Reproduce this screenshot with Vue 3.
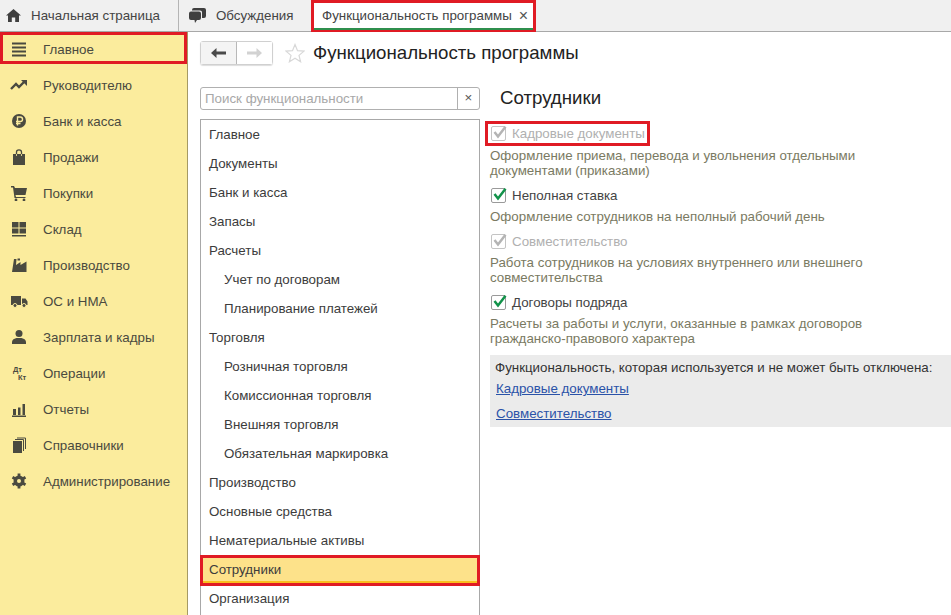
<template>
  <div class="page">
    <!-- вкладки -->
    <header class="tabs">
      <div class="tab tab--home">
        <svg class="tab__icon" width="15" height="13" viewBox="0 0 15 13">
          <path d="M7.5 0 L15 6.6 L13 6.6 L13 13 L9.2 13 L9.2 8.4 L5.8 8.4 L5.8 13 L2 13 L2 6.6 L0 6.6 Z" fill="#3f3f3f" />
        </svg>
        <span>Начальная страница</span>
      </div>
      <div class="tab tab--talk">
        <svg class="tab__icon" width="17" height="15" viewBox="0 0 17 15">
          <path d="M5 0 H15 Q17 0 17 2 V8 Q17 10 15 10 L13 10 V4 Q13 2.500 11 2.500 H3 V2 Q3 0 5 0 Z" fill="#3f3f3f" />
          <path d="M2 3.500 H10 Q12 3.500 12 5.500 V10 Q12 12 10 12 H8 L6 15 L5.500 12 H2 Q0 12 0 10 V5.500 Q0 3.500 2 3.500 Z" fill="#3f3f3f" />
        </svg>
        <span>Обсуждения</span>
      </div>
      <div class="tab tab--active">
        <span>Функциональность программы</span>
        <span class="tab__close">×</span>
      </div>
    </header>

    <div class="body">
      <!-- разделы -->
      <aside class="side">
        <div
          v-for="item in sections"
          :key="item.name"
          class="side__item"
          :class="{ 'side__item--active': item.active }"
        >
          <svg class="side__icon" width="18" height="16" viewBox="0 0 18 16" v-html="item.icon"></svg>
          <span>{{ item.name }}</span>
        </div>
      </aside>

      <main class="main">
        <div class="head">
          <div class="nav">
            <button type="button" class="nav__btn">
              <svg width="15" height="10" viewBox="0 0 15 10"><path d="M0 5 L5.500 0 V3.500 H15 V6.500 H5.500 V10 Z" fill="#4a4a4a" /></svg>
            </button>
            <button type="button" class="nav__btn nav__btn--off">
              <svg width="15" height="10" viewBox="0 0 15 10"><path d="M15 5 L9.500 0 V3.500 H0 V6.500 H9.500 V10 Z" fill="#d2d2d2" /></svg>
            </button>
          </div>
          <svg class="star" width="20" height="20" viewBox="0 0 20 20">
            <path d="M10 1.500 L12.500 7.700 L19 8.100 L14 12.400 L15.600 18.800 L10 15.300 L4.400 18.800 L6 12.400 L1 8.100 L7.500 7.700 Z" fill="none" stroke="#d8d8d8" stroke-width="1.200" />
          </svg>
          <h1 class="title">Функциональность программы</h1>
        </div>

        <div class="cols">
          <div class="left">
            <div class="search">
              <span class="search__text">Поиск функциональности</span>
              <span class="search__clear">×</span>
            </div>
            <ul class="list">
              <li
                v-for="row in rows"
                :key="row.name"
                class="list__row"
                :class="{ 'list__row--sub': row.sub, 'list__row--active': row.active }"
              >{{ row.name }}</li>
            </ul>
          </div>

          <section class="right">
            <h2 class="right__title">Сотрудники</h2>

            <div v-for="opt in options" :key="opt.name" class="opt">
              <div class="opt__line" :class="{ 'opt__line--marked': opt.marked, 'opt__line--off': opt.off }">
                <span class="check">
                  <svg width="15" height="15" viewBox="0 0 15 15">
                    <path d="M3.500 6 L7 10.500 L14.500 .8" fill="none" :stroke="opt.off ? '#b4b4b4' : '#12924a'" stroke-width="2.500" />
                  </svg>
                </span>
                <span>{{ opt.name }}</span>
              </div>
              <p class="opt__desc">{{ opt.desc }}</p>
            </div>

            <div class="used">
              <div class="used__title">Функциональность, которая используется и не может быть отключена:</div>
              <a class="used__link used__link--first">Кадровые документы</a>
              <a class="used__link">Совместительство</a>
            </div>
          </section>
        </div>
      </main>
    </div>
  </div>
</template>

<script setup>
const ic = '#4a4a40'

const sections = [
  { name: 'Главное', active: true, icon: `<path d="M2 1.500h14v2H2zM2 5.500h14v2H2zM2 9.500h14v2H2zM2 13.500h14v2H2z" fill="${ic}"/>` },
  { name: 'Руководителю', icon: `<path d="M1 12 L6 7 L9 10 L14 5" fill="none" stroke="${ic}" stroke-width="2.400"/><path d="M11 3 H17 V9 Z" fill="${ic}"/>` },
  { name: 'Банк и касса', icon: `<circle cx="9" cy="8" r="7" fill="${ic}"/><path d="M7.500 12.500V4h2.800a2 2 0 0 1 0 4.500H6M6 10.500h4.500" fill="none" stroke="#fbec9d" stroke-width="1.400"/>` },
  { name: 'Продажи', icon: `<path d="M3 5 H15 V16 H3 Z" fill="${ic}"/><path d="M6.500 7 V3 Q6.500 .8 9 .8 Q11.500 .8 11.500 3 V7" fill="none" stroke="${ic}" stroke-width="1.300"/><path d="M6.500 5v2M11.500 5v2" stroke="#fbec9d" stroke-width=".8"/>` },
  { name: 'Покупки', icon: `<path d="M1 1 H4 L5 3 H17 L15.500 10 H5.500 L6 12 H15.500 V13 H4.500 L3 2.500 H1 Z" fill="${ic}"/><circle cx="6" cy="15" r="1.400" fill="${ic}"/><circle cx="14" cy="15" r="1.400" fill="${ic}"/>` },
  { name: 'Склад', icon: `<path d="M2 1h6.500v5.500H2zM9.500 1H16v5.500H9.500zM2 7.500h6.500V12.500H2zM9.500 7.500H16V12.500H9.500zM2 14h14v1.500H2z" fill="${ic}"/>` },
  { name: 'Производство', icon: `<path d="M2 15 L4 2 H6.500 L6 8 L10.500 5 V8 L16.500 4.500 V15 Z" fill="${ic}"/><path d="M7.500 1.500h2.500v2H7.500z" fill="${ic}"/>` },
  { name: 'ОС и НМА', icon: `<path d="M1 3 H11 V12 H1 Z M12 5.500 H15.500 L17.500 8.500 V12 H12 Z" fill="${ic}"/><circle cx="5" cy="12.500" r="2" fill="${ic}" stroke="#fbec9d"/><circle cx="14" cy="12.500" r="2" fill="${ic}" stroke="#fbec9d"/>` },
  { name: 'Зарплата и кадры', icon: `<circle cx="9" cy="4.500" r="3.500" fill="${ic}"/><path d="M2 15 V13 Q2 10 6.500 9 H11.500 Q16 10 16 13 V15 Z" fill="${ic}"/>` },
  { name: 'Операции', icon: `<text x="3" y="7" font-family="Liberation Sans" font-size="7.500" font-weight="700" fill="${ic}">Дт</text><text x="8" y="14.500" font-family="Liberation Sans" font-size="7.500" font-weight="700" fill="${ic}">Кт</text>` },
  { name: 'Отчеты', icon: `<path d="M3 8h3v6H3zM8 6.500h2.500V14H8zM12.500 3H15v11h-2.500zM2 14.500h14V16H2z" fill="${ic}"/>` },
  { name: 'Справочники', icon: `<path d="M3 4 H12 V16 H3 Z" fill="${ic}"/><path d="M5 2.500 H13.500 V14 M7 1 H15.500 V12" fill="none" stroke="${ic}"/>` },
  { name: 'Администрирование', icon: `<circle cx="9" cy="8" r="4" fill="none" stroke="${ic}" stroke-width="3"/><path d="M9 8 L9 .5 M9 8 L9 15.500 M9 8 L2.500 4.200 M9 8 L15.500 4.200 M9 8 L2.500 11.800 M9 8 L15.500 11.800" stroke="${ic}" stroke-width="2.800"/><circle cx="9" cy="8" r="2" fill="#fbec9d"/>` },
]

const rows = [
  { name: 'Главное' },
  { name: 'Документы' },
  { name: 'Банк и касса' },
  { name: 'Запасы' },
  { name: 'Расчеты' },
  { name: 'Учет по договорам', sub: true },
  { name: 'Планирование платежей', sub: true },
  { name: 'Торговля' },
  { name: 'Розничная торговля', sub: true },
  { name: 'Комиссионная торговля', sub: true },
  { name: 'Внешняя торговля', sub: true },
  { name: 'Обязательная маркировка', sub: true },
  { name: 'Производство' },
  { name: 'Основные средства' },
  { name: 'Нематериальные активы' },
  { name: 'Сотрудники', active: true },
  { name: 'Организация' },
]

const options = [
  {
    name: 'Кадровые документы',
    off: true,
    marked: true,
    desc: 'Оформление приема, перевода и увольнения отдельными документами (приказами)',
  },
  { name: 'Неполная ставка', desc: 'Оформление сотрудников на неполный рабочий день' },
  {
    name: 'Совместительство',
    off: true,
    desc: 'Работа сотрудников на условиях внутреннего или внешнего совместительства',
  },
  {
    name: 'Договоры подряда',
    desc: 'Расчеты за работы и услуги, оказанные в рамках договоров гражданско-правового характера',
  },
]
</script>

<style scoped>
.page {
  width: 951px;
  height: 615px;
  overflow: hidden;
  display: flex;
  flex-direction: column;
  font-family: "Liberation Sans", Arial, sans-serif;
  font-size: 13.33px;
  color: #333;
  background: #fff;
}

/* вкладки */
.tabs {
  display: flex;
  height: 32px;
  flex: none;
  box-sizing: border-box;
  background: #f0f0f0;
  border-bottom: 1px solid #a8a8a8;
}
.tab {
  display: flex;
  align-items: center;
  box-sizing: border-box;
  height: 31px;
  color: #444;
}
.tab--home {
  width: 179px;
  padding-left: 6px;
  gap: 10px;
  border-right: 1px solid #b4b4b4;
}
.tab--talk {
  width: 132px;
  padding-left: 10px;
  gap: 10px;
}
.tab--active {
  width: 225px;
  height: 32px;
  padding: 0 5px 2px 8px;
  justify-content: space-between;
  background: #fff;
  border: 3px solid #e01b24;
  border-bottom-width: 2px;
  box-shadow: inset 0 -2px 0 #2f8f4e;
  white-space: nowrap;
}
.tab__close {
  font-size: 16px;
  color: #555;
}

.body {
  flex: 1;
  display: flex;
  min-height: 0;
}

/* разделы */
.side {
  width: 188px;
  flex: none;
  box-sizing: border-box;
  background: #fbec9d;
  border-right: 1px solid #a59a64;
}
.side__item {
  height: 36px;
  display: flex;
  align-items: center;
  gap: 15px;
  padding-left: 10px;
  color: #4a4a40;
}
.side__icon {
  flex: none;
}
.side__item--active {
  height: 32px;
  margin-bottom: 3px;
  width: 187px;
  box-sizing: border-box;
  border: 3px solid #e01b24;
  padding: 2px 0 0 7px;
}

.main {
  flex: 1;
  min-width: 0;
}
.head {
  display: flex;
  align-items: center;
  height: 24px;
  margin: 9px 0 22px 12px;
}
.nav {
  display: flex;
  width: 73px;
  height: 24px;
  box-sizing: border-box;
  border: 1px solid #d0d0d0;
  border-radius: 3px;
  box-shadow: 0 1px 1px #ddd;
}
.nav__btn {
  flex: 1;
  padding: 0;
  border: 0;
  background: #f4f4f4;
  display: flex;
  align-items: center;
  justify-content: center;
  border-right: 1px solid #b8b8b8;
}
.nav__btn--off {
  background: #fff;
  border-right: 0;
}
.star {
  margin-left: 12px;
}
.title {
  margin: 0 0 0 8px;
  font-size: 18.67px;
  font-weight: 400;
  color: #222;
}

.cols {
  display: flex;
}
.left {
  width: 280px;
  margin-left: 12px;
  flex: none;
}
.search {
  display: flex;
  height: 23px;
  box-sizing: border-box;
  border: 1px solid #b0b0b0;
  border-radius: 3px;
  align-items: center;
  color: #a8a8a8;
}
.search__text {
  flex: 1;
  padding-left: 4px;
}
.search__clear {
  width: 21px;
  height: 21px;
  line-height: 20px;
  text-align: center;
  border-left: 1px solid #b0b0b0;
  color: #555;
}
.list {
  list-style: none;
  margin: 9px 0 0;
  padding: 0;
  height: 520px;
  box-sizing: border-box;
  border: 1px solid #a8a8a8;
}
.list__row {
  height: 29px;
  line-height: 29px;
  padding-left: 8px;
  color: #3c3c3c;
  white-space: nowrap;
}
.list__row--sub {
  padding-left: 23px;
}
.list__row--active {
  height: 31px;
  line-height: 23px;
  margin: 0 -1px -2px;
  box-sizing: border-box;
  border: 3px solid #e01b24;
  background: #fde28a;
  box-shadow: inset 0 -2px 0 #fbbe1e;
  padding-left: 6px;
}

.right {
  flex: 1;
  min-width: 0;
  margin-left: 10px;
}
.right__title {
  margin: 0 0 12px 10px;
  height: 22px;
  line-height: 22px;
  font-size: 18.67px;
  font-weight: 400;
  color: #222;
}
.opt__line {
  display: flex;
  align-items: center;
  gap: 6px;
  height: 21px;
  padding-left: 1px;
  color: #444;
}
.opt__line--off {
  color: #b0b0b0;
}
.opt__line--marked {
  width: 165px;
  box-sizing: border-box;
  height: 25px;
  margin: 0 0 -1px -5px;
  padding-left: 3px;
  border: 3px solid #e01b24;
}
.check {
  width: 15px;
  height: 15px;
  flex: none;
  box-sizing: border-box;
  border: 1px solid #9a9a9a;
  border-radius: 2px;
  display: flex;
  background: #fff;
}
.check svg {
  margin: -1px;
  overflow: visible;
}
.opt__line--off .check {
  border-color: #c4c4c4;
}
.opt__desc {
  margin: 3px 0 7px;
  width: 400px;
  line-height: 15px;
  color: #7a7a62;
}
.used {
  margin-top: 9px;
  height: 72px;
  box-sizing: border-box;
  padding: 5px 5px 0;
  background: #ebebeb;
  color: #333;
}
.used__title {
  line-height: 15px;
  white-space: nowrap;
}
.used__link {
  display: block;
  margin: 10px 0 0 1px;
  line-height: 15px;
  color: #2a52a8;
  text-decoration: underline;
}
.used__link--first {
  margin-top: 6px;
}
</style>
